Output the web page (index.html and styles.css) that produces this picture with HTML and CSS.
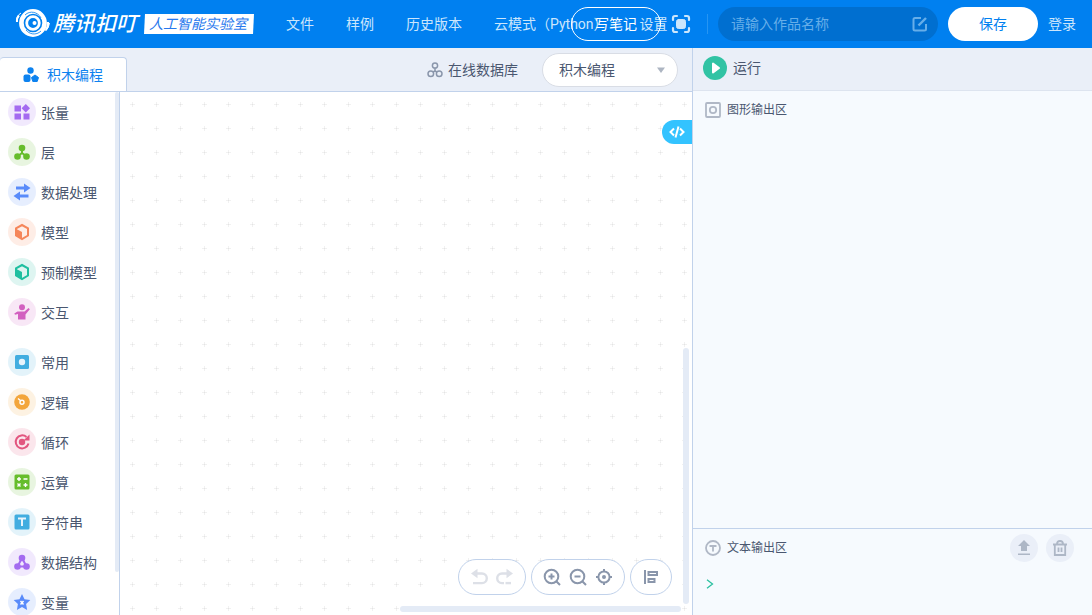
FILE: index.html
```html
<!DOCTYPE html>
<html lang="zh-CN">
<head>
<meta charset="utf-8">
<title>腾讯扣叮 人工智能实验室</title>
<link rel="stylesheet" href="styles.css">
</head>
<body>
<header class="topbar">
  <a class="brand" href="#">
    <svg class="brand-mark" width="36" height="30" viewBox="0 0 36 30" fill="none" stroke="#fff">
      <circle cx="18" cy="15" r="11.6" stroke-width="4.600"/>
      <circle cx="18" cy="15" r="6.300" stroke-width="2.800"/>
      <path d="M10 7c5-5 13-3 16 3M26 23c-5 5-12 3-15-1" stroke="#0080f0" stroke-width=".8"/>
      <circle cx="19.500" cy="15" r="2" fill="#fff" stroke="none"/>
      <path d="M4 7.500Q1.500 10 2 14M33 14q.5 5-2.500 8" stroke-width="2"/>
      <path d="M1.500 14Q1 8 6 5M34.500 15q-.5 5-4 8" stroke-width="1"/>
    </svg>
    <span class="brand-name">腾讯扣叮</span>
    <span class="brand-tag">人工智能实验室</span>
  </a>
  <nav class="menu">
    <a href="#">文件</a>
    <a href="#">样例</a>
    <a href="#">历史版本</a>
    <a href="#">云模式（Python）</a>
    <a href="#">设置</a>
  </nav>
  <div class="account">
    <button class="pill note-btn" type="button">写笔记</button>
    <button class="icon-btn" type="button" aria-label="全屏">
      <svg width="20" height="20" viewBox="0 0 20 20" fill="none" stroke="#cce6fc" stroke-width="2.2" stroke-linecap="round" stroke-linejoin="round"><rect x="5.500" y="5.500" width="9" height="9" rx="2" fill="#cce6fc" stroke-width="1"/><path d="M2 6V4q0-2 2-2h2M14 2h2q2 0 2 2v2M18 14v2q0 2-2 2h-2M6 18H4q-2 0-2-2v-2"/></svg>
    </button>
    <span class="separator"></span>
    <label class="title-box">
      <input type="text" placeholder="请输入作品名称" aria-label="作品名称">
      <svg width="16" height="16" viewBox="0 0 16 16" fill="none" stroke="#66aee9" stroke-width="2"><path d="M9 2H3Q1.500 2 1.500 3.500v9.500q0 1.500 1.500 1.500h9.500q1.500 0 1.500-1.500V8"/><path d="M6.500 9.500 14 2" stroke-width="2.400"/></svg>
    </label>
    <button class="pill save-btn" type="button">保存</button>
    <a class="login" href="#">登录</a>
  </div>
</header>

<main class="workspace">
  <section class="editor">
    <div class="toolbar">
      <button class="tab" type="button">
        <svg width="16" height="16" viewBox="0 0 16 16" fill="#0d82ef"><circle cx="7.500" cy="3.500" r="3.200"/><rect x=".5" y="7.500" width="7" height="7.500" rx="2"/><path d="m12 8 3.500 2.500-1.300 4H9.800l-1.300-4z" stroke="#0d82ef" stroke-linejoin="round"/></svg>
        积木编程
      </button>
      <div class="tools">
        <a class="database" href="#">
          <svg width="16" height="16" viewBox="0 0 16 16" fill="none" stroke="#8a96ab" stroke-width="1.500"><circle cx="8" cy="3.500" r="2.600"/><circle cx="3.800" cy="11.800" r="2.800"/><circle cx="12.200" cy="11.800" r="2.800"/><path d="M8 6v3L6 10M8 9l2 1"/></svg>
          在线数据库
        </a>
        <label class="mode">
          <select aria-label="编程模式"><option>积木编程</option></select>
          <svg width="8" height="6" viewBox="0 0 8 6"><path d="M0 .5h8L4 6z" fill="#adb5c2"/></svg>
        </label>
      </div>
    </div>
    <div class="editor-body">
      <aside class="sidebar">
        <ul class="categories">
          <li><a href="#"><svg class="cat violet" viewBox="0 0 28 28"><circle class="halo" cx="14" cy="14" r="14"/><path d="M6.500 7.500h6.500v6H6.500zM6.500 15.500h6.500v6H6.500zM15.500 15.500H21.500v6h-6zM17.800 6l4.200 4.200-4.200 4.200-4.200-4.200z"/></svg><span>张量</span></a></li>
          <li><a href="#"><svg class="cat green" viewBox="0 0 28 28"><circle class="halo" cx="14" cy="14" r="14"/><path class="line" d="M14 10v5l-4.500 3.500M14 15l4.500 3.500"/><circle cx="14" cy="10" r="3.300"/><circle cx="9.500" cy="18.500" r="3.300"/><circle cx="18.500" cy="18.500" r="3.300"/></svg><span>层</span></a></li>
          <li><a href="#"><svg class="cat blue" viewBox="0 0 28 28"><circle class="halo" cx="14" cy="14" r="14"/><path d="M8 8.500h8V5.500l6.500 4.500-6.500 4.500v-3H8zM20.500 19.500H12v3L5.500 18l6.500-4.500v3h8.500z"/></svg><span>数据处理</span></a></li>
          <li><a href="#"><svg class="cat orange" viewBox="0 0 28 28"><circle class="halo" cx="14" cy="14" r="14"/><path class="line" d="m14 7 6 3.300v7.200L14 21l-6-3.500v-7.200z"/><path d="m7.500 10.500 6.500 3.500v7l-6-3.500z"/></svg><span>模型</span></a></li>
          <li><a href="#"><svg class="cat teal" viewBox="0 0 28 28"><circle class="halo" cx="14" cy="14" r="14"/><path class="line" d="m14 7 6 3.300v7.200L14 21l-6-3.500v-7.200z"/><path d="m7.500 10.500 6.500 3.500v7l-6-3.500z"/></svg><span>预制模型</span></a></li>
          <li><a href="#"><svg class="cat pink" viewBox="0 0 28 28"><circle class="halo" cx="14" cy="14" r="14"/><circle cx="14" cy="9.300" r="3"/><path d="M6.300 15.500 9.500 13.500h7l4-3.500 1.300 1.200-4.300 5.300V21.500H10V16l-3 .8z"/></svg><span>交互</span></a></li>
        </ul>
        <ul class="categories">
          <li><a href="#"><svg class="cat sky" viewBox="0 0 28 28"><circle class="halo" cx="14" cy="14" r="14"/><rect x="7" y="7" width="14" height="14" rx="1.500"/><circle class="cut" cx="14" cy="14" r="3.200"/></svg><span>常用</span></a></li>
          <li><a href="#"><svg class="cat amber" viewBox="0 0 28 28"><circle class="halo" cx="14" cy="14" r="14"/><circle cx="14" cy="14" r="7.800"/><path class="cut-line" d="m10 10.500 3 2.500"/><circle class="cut-line" cx="14" cy="14.300" r="2"/></svg><span>逻辑</span></a></li>
          <li><a href="#"><svg class="cat rose" viewBox="0 0 28 28"><circle class="halo" cx="14" cy="14" r="14"/><path class="line" d="M18.500 9a6.500 6.500 0 1 0 2 6.500"/><path d="M21.500 6.500v6h-6z"/><circle cx="14" cy="14" r="3.200"/></svg><span>循环</span></a></li>
          <li><a href="#"><svg class="cat green" viewBox="0 0 28 28"><circle class="halo" cx="14" cy="14" r="14"/><rect x="6.500" y="6.500" width="15" height="15" rx="1.500"/><path class="cut-line" d="M9 11h4M11 9v4M15.500 11h4M9.500 15.500l3 3M12.500 15.500l-3 3M15.500 17h4M17.500 15v4"/></svg><span>运算</span></a></li>
          <li><a href="#"><svg class="cat sky" viewBox="0 0 28 28"><circle class="halo" cx="14" cy="14" r="14"/><rect x="6.500" y="6.500" width="15" height="15" rx="1.500"/><path class="cut" d="M10 9.500h8v2h-3V18h-2v-6.500h-3z"/></svg><span>字符串</span></a></li>
          <li><a href="#"><svg class="cat violet" viewBox="0 0 28 28"><circle class="halo" cx="14" cy="14" r="14"/><path class="line" d="m14 10-4.500 8.500h9z"/><circle cx="14" cy="10" r="3.300"/><circle cx="9.500" cy="18.500" r="3.300"/><circle cx="18.500" cy="18.500" r="3.300"/></svg><span>数据结构</span></a></li>
          <li><a href="#"><svg class="cat blue" viewBox="0 0 28 28"><circle class="halo" cx="14" cy="14" r="14"/><path d="m14 6 2.500 5.300 5.800.8-4.200 4 1 5.800L14 19l-5.100 2.900 1-5.800-4.200-4 5.800-.8z"/><path class="cut-line" d="m12.500 13 3 3.500m0-3.500-3 3.500"/></svg><span>变量</span></a></li>
        </ul>
        <span class="thumb sidebar-thumb"></span>
      </aside>
      <div class="canvas">
        <svg class="grid" width="100%" height="100%">
          <defs><pattern id="cross" width="24" height="24" patternUnits="userSpaceOnUse"><path d="M10 12.500h5M12.500 10v5" stroke="#f1f1f1"/><path d="M12 12.500h1" stroke="#e4e4e4"/></pattern></defs>
          <rect width="100%" height="100%" fill="url(#cross)"/>
        </svg>
        <button class="code-toggle" type="button" aria-label="查看代码">
          <svg width="16" height="12" viewBox="0 0 16 12" fill="none" stroke="#fff" stroke-width="2"><path d="M5 2.500 1.500 6 5 9.500M11 2.500 14.500 6 11 9.500M9.500.5l-3 11"/></svg>
        </button>
        <div class="controls">
          <div class="control-group">
            <button type="button" aria-label="撤销"><svg width="18" height="18" viewBox="0 0 18 18"><path d="M6 5.500h6a4.800 4.800 0 0 1 0 9.600H3" fill="none" stroke="#dde0e7" stroke-width="2.400"/><path d="M1 5.500 7.500.8v9.400z" fill="#dde0e7"/></svg></button>
            <button type="button" aria-label="重做"><svg width="18" height="18" viewBox="0 0 18 18"><path d="M12 5.500H6a4.800 4.800 0 0 0 0 9.600h2" fill="none" stroke="#dde0e7" stroke-width="2.400"/><path d="M9.500 15.100H15" stroke="#dde0e7" stroke-width="2.400"/><path d="M17 5.500 10.500.8v9.400z" fill="#dde0e7"/></svg></button>
          </div>
          <div class="control-group">
            <button type="button" aria-label="放大"><svg class="tool" width="18" height="18" viewBox="0 0 18 18"><circle cx="8.500" cy="8.500" r="6.800"/><path d="m13 13 4 4M5.500 8.500h6M8.500 5.500v6"/></svg></button>
            <button type="button" aria-label="缩小"><svg class="tool" width="18" height="18" viewBox="0 0 18 18"><circle cx="8.500" cy="8.500" r="6.800"/><path d="m13 13 4 4M5.500 8.500h6"/></svg></button>
            <button type="button" aria-label="居中"><svg class="tool" width="18" height="18" viewBox="0 0 18 18"><circle cx="9" cy="9" r="5.600"/><path d="M9 1v3M9 14v3M1 9h3M14 9h3"/><circle cx="9" cy="9" r="1"/></svg></button>
          </div>
          <div class="control-group">
            <button type="button" aria-label="整理积木"><svg class="tool" width="18" height="18" viewBox="0 0 18 18"><path d="M3 2v14M6.500 4h8.500v3H6.500zM6.500 11h6v3h-6z"/></svg></button>
          </div>
        </div>
        <span class="thumb vertical-thumb"></span>
        <span class="thumb horizontal-thumb"></span>
      </div>
    </div>
  </section>

  <section class="output">
    <div class="run-bar">
      <button class="run" type="button">
        <svg width="24" height="24" viewBox="0 0 24 24"><circle cx="12" cy="12" r="12" fill="#31c3a4"/><path d="M10 7.500v9l6-4.500z" fill="#fff" stroke="#fff" stroke-width="2" stroke-linejoin="round"/></svg>
        运行
      </button>
    </div>
    <div class="graphic-output">
      <h2 class="panel-title">
        <svg width="16" height="16" viewBox="0 0 16 16" fill="none" stroke="#b0b8c6" stroke-width="1.800"><rect x="1" y="1" width="14" height="14" rx="1"/><circle cx="8" cy="8" r="3.200"/></svg>
        图形输出区
      </h2>
    </div>
    <div class="text-output">
      <div class="text-head">
        <h2 class="panel-title">
          <svg width="16" height="16" viewBox="0 0 16 16" fill="none" stroke="#b0b8c6" stroke-width="1.800"><circle cx="8" cy="8" r="7"/><path d="M4.500 6h7M8 6v5.500"/></svg>
          文本输出区
        </h2>
        <div class="text-actions">
          <button type="button" aria-label="上传"><svg width="16" height="16" viewBox="0 0 16 16" fill="#adb7c6"><path d="M8 0 2 6h3v5h6V6h3zM2 13.500h12V15H2z"/></svg></button>
          <button type="button" aria-label="清空"><svg width="16" height="16" viewBox="0 0 16 16" fill="none" stroke="#adb7c6" stroke-width="1.800"><path d="M1 4.500h14M2.800 5v10h10.400V5M5 4q0-3 3-3t3 3M6.500 7.500V12M9.500 7.500V12"/></svg></button>
        </div>
      </div>
      <svg class="prompt" width="8" height="10" viewBox="0 0 8 10" fill="none" stroke="#2bc0a0" stroke-width="1.300"><path d="M1 .8 6.500 5 1 9.200"/></svg>
    </div>
  </section>
</main>
</body>
</html>
```
FILE: styles.css
```css
* { box-sizing: border-box; }
body {
  margin: 0;
  height: 100vh;
  display: flex;
  flex-direction: column;
  overflow: hidden;
  font: 14px/20px Roboto, "Noto Sans CJK SC", sans-serif;
  color: #4a5770;
  background: #fff;
}
a { color: inherit; text-decoration: none; }
button, input, select { font: inherit; color: inherit; }
button { border: 0; padding: 0; background: none; cursor: pointer; }
svg { display: block; flex: none; }

.topbar {
  flex: none;
  height: 48px;
  display: flex;
  align-items: center;
  padding: 0 16px 0 15px;
  background: #0080f0;
  color: #cce6fc;
}
.brand { display: flex; align-items: center; color: #fff; white-space: nowrap; }
.brand-mark { margin-bottom: 2px; }
.brand-name { margin-left: 2px; font-size: 21px; line-height: 28px; font-weight: 500; font-style: italic; }
.brand-tag {
  margin-left: 7px;
  padding: 0 7px 0 5px;
  background: #fff;
  color: #2878ed;
  font-style: italic;
  clip-path: polygon(1px 0, 100% 0, calc(100% - 1px) 100%, 0 100%);
}
.menu { flex: 1; min-width: 0; display: flex; gap: 32px; margin-left: 32px; white-space: nowrap; }
.account { flex: none; display: flex; align-items: center; gap: 10px; }
.pill { height: 34px; width: 90px; border-radius: 17px; }
.note-btn { border: 1px solid #fff; color: #fff; }
.separator { width: 1px; height: 20px; margin-left: 6px; background: #2695f3; }
.title-box { display: flex; align-items: center; width: 220px; height: 34px; padding: 0 10px 0 13px; border-radius: 17px; background: #006fd0; }
.title-box input { flex: 1; min-width: 0; padding: 0; border: 0; outline: 0; background: none; color: #fff; }
.title-box input::placeholder { color: #66aee9; }
.save-btn { background: #fff; color: #0080f0; }

.workspace { flex: 1; min-height: 0; display: flex; }
.editor { flex: 1; min-width: 0; display: flex; flex-direction: column; }
.toolbar { flex: none; height: 44px; display: flex; align-items: flex-end; justify-content: space-between; border-bottom: 1px solid #c1d2eb; background: #eaeff8; }
.tab {
  display: flex;
  align-items: center;
  gap: 8px;
  height: 34px;
  padding: 0 23px 0 23px;
  border: 1px solid #c1d2eb;
  border-width: 1px 1px 0 0;
  border-radius: 4px 4px 0 0;
  background: #fff;
  color: #0d82ef;
}
.tools { display: flex; align-items: center; gap: 24px; height: 100%; padding-right: 14px; }
.database { display: flex; align-items: center; gap: 5px; }
.mode { position: relative; }
.mode select { display: block; width: 136px; height: 34px; padding: 0 16px; border: 1px solid #d9dde5; border-radius: 17px; background: #fff; appearance: none; outline: 0; }
.mode svg { position: absolute; right: 13px; top: 14px; pointer-events: none; }

.editor-body { flex: 1; min-height: 0; display: flex; }
.sidebar { position: relative; flex: none; width: 120px; overflow: hidden; border-right: 1px solid #c1d2eb; }
.categories { list-style: none; margin: 0 0 10px; padding: 0; }
.categories a { display: flex; align-items: center; gap: 5px; height: 40px; padding-left: 8px; }
.categories span { padding-top: 2px; }
.cat { width: 28px; height: 28px; fill: var(--tone); stroke: none; }
.halo { opacity: .15; }
.line { fill: none; stroke: var(--tone); stroke-width: 2; }
.cut { fill: #e8f4fc; }
.cut-line { fill: none; stroke: #fff; stroke-width: 1.4; }
.violet { --tone: #a46bf0; }
.green { --tone: #66bd2c; }
.blue { --tone: #598bfa; }
.orange { --tone: #f5865a; }
.teal { --tone: #1fbfa0; }
.pink { --tone: #d260c0; }
.sky { --tone: #41ade0; }
.amber { --tone: #f3a63c; }
.rose { --tone: #e2557f; }

.thumb { position: absolute; border-radius: 3px; background: #e4ebf6; }
.sidebar-thumb { right: 0; top: 0; width: 4px; height: 480px; }
.vertical-thumb { right: 3px; top: 256px; width: 6px; bottom: 11px; }
.horizontal-thumb { left: 280px; right: 11px; bottom: 3px; height: 6px; }

.canvas { position: relative; flex: 1; min-width: 0; }
.grid { position: absolute; inset: 0; }
.code-toggle { position: absolute; right: 0; top: 28px; width: 30px; height: 24px; padding-left: 7px; border-radius: 12px 0 0 12px; background: #33c3ff; }
.controls { position: absolute; right: 20px; bottom: 20px; display: flex; gap: 5px; }
.control-group { display: flex; align-items: center; gap: 8px; height: 36px; padding: 0 11px; border: 1px solid #c1d2eb; border-radius: 18px; background: #fff; }
.control-group button { width: 18px; height: 18px; }
.tool { fill: none; stroke: #8a96ab; stroke-width: 2; }

.output { flex: none; width: 400px; display: flex; flex-direction: column; border-left: 1px solid #c1d2eb; background: #f6fafe; }
.run-bar { height: 43px; display: flex; align-items: center; padding: 0 10px 2px; border-bottom: 1px solid #dde4ef; background: #eaeff8; }
.run { display: flex; align-items: center; gap: 6px; }
.graphic-output { flex: 1; padding: 9px 12px; }
.panel-title { display: flex; align-items: center; gap: 6px; margin: 0; font-size: 12px; line-height: 20px; font-weight: inherit; }
.text-output { height: 87px; padding: 5px 18px 0 12px; border-top: 1px solid #c1d2eb; }
.text-head { display: flex; align-items: center; justify-content: space-between; }
.text-actions { display: flex; gap: 8px; }
.text-actions button { display: grid; place-items: center; width: 28px; height: 28px; border-radius: 50%; background: #eaeff8; }
.prompt { margin: 17px 0 0 1px; }
```
